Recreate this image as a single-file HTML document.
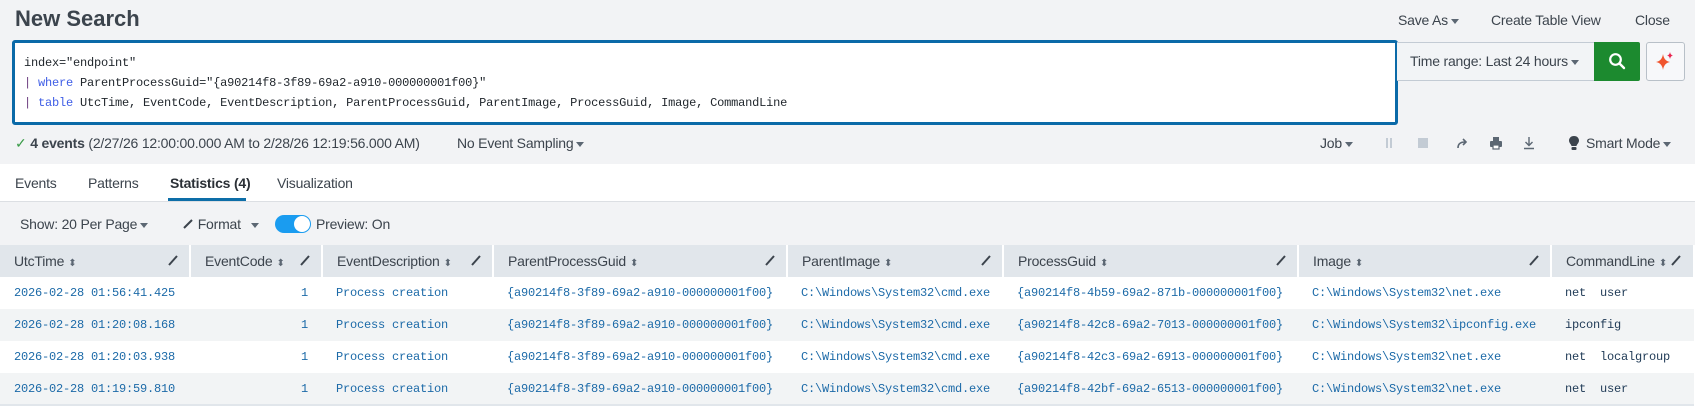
<!DOCTYPE html>
<html><head><meta charset="utf-8"><style>
*{box-sizing:border-box;margin:0;padding:0}
body{width:1695px;height:410px;overflow:hidden;background:#fff;font-family:"Liberation Sans",sans-serif;color:#3c444d;position:relative}
.abs{position:absolute;white-space:nowrap}
.top{position:absolute;left:0;top:0;width:1695px;height:164px;background:#f2f3f5}
.mono{font-family:"Liberation Mono",monospace;font-size:12px;letter-spacing:-0.2px}
.t14{font-size:14px;letter-spacing:-0.2px}
.caret{display:inline-block;width:0;height:0;border-left:4px solid transparent;border-right:4px solid transparent;border-top:5px solid #5c6773;vertical-align:middle;margin-left:3px}
.tb{position:absolute;left:0;top:202px;width:1695px;height:43px;background:#f2f3f5}
table{position:absolute;left:0;top:245px;border-collapse:collapse;width:1695px}
th{height:32px;background:#e1e6eb;text-align:left;font-weight:normal;font-size:14px;letter-spacing:-0.2px;color:#3c444d;padding-left:14px;border-right:2px solid #fff;position:relative;white-space:nowrap}
td{height:32px;padding-left:14px;color:#1c6aa8;white-space:nowrap}
tr.s td{background:#f2f4f5}
tbody tr:last-child td{border-bottom:2px solid #e1e6eb}
.sort{color:#5c6773;font-size:10px;margin-left:4px}
.pen{position:absolute;right:10px;top:9px;width:12px;height:12px}
</style></head><body>
<div class="top"></div>
<div class="abs" style="left:15px;top:6px;font-size:22px;font-weight:bold;color:#3c444d">New Search</div>
<div class="abs t14" style="left:1398px;top:12px">Save As<span class="caret"></span></div>
<div class="abs t14" style="left:1491px;top:12px">Create Table View</div>
<div class="abs t14" style="left:1635px;top:12px">Close</div>

<div class="abs" style="left:12px;top:40px;width:1386px;height:85px;background:#fff;border:3px solid #0b6aa8;border-radius:3px"></div>
<div class="abs mono" style="left:24px;top:53px;line-height:20px;color:#1f252b">index="endpoint"<br><span style="color:#6b3a7e">|</span> <span style="color:#3f5ee6">where</span> ParentProcessGuid="{a90214f8-3f89-69a2-a910-000000001f00}"<br><span style="color:#6b3a7e">|</span> <span style="color:#3f5ee6">table</span> UtcTime, EventCode, EventDescription, ParentProcessGuid, ParentImage, ProcessGuid, Image, CommandLine</div>

<div class="abs" style="left:1397px;top:42px;width:197px;height:39px;background:#f2f4f6;border-top:1px solid #c3cbd4;border-bottom:1px solid #c3cbd4"></div>
<div class="abs t14" style="left:1410px;top:53px">Time range: Last 24 hours<span class="caret"></span></div>
<div class="abs" style="left:1594px;top:42px;width:46px;height:39px;background:#1c8a2f;border-radius:0 2px 2px 0"></div>
<svg class="abs" style="left:1608px;top:52px" width="18" height="18" viewBox="0 0 18 18"><circle cx="7.5" cy="7.5" r="5.3" fill="none" stroke="#fff" stroke-width="2.2"/><path d="M11.5 11.5L16 16" stroke="#fff" stroke-width="2.4" stroke-linecap="round"/></svg>
<div class="abs" style="left:1646px;top:42px;width:39px;height:39px;background:#f7f8fa;border:1px solid #b8c0c8;border-radius:3px"></div>
<svg class="abs" style="left:1654px;top:50px" width="22" height="22" viewBox="0 0 22 22"><path d="M9 4 Q10 11 16 12 Q10 13 9 20 Q8 13 2 12 Q8 11 9 4Z" fill="#f0542d"/><path d="M16 2 Q16.5 5 19 5.5 Q16.5 6 16 9 Q15.5 6 13 5.5 Q15.5 5 16 2Z" fill="#e8254f"/></svg>

<div class="abs t14" style="left:15px;top:135px"><span style="color:#3a9b48">✓</span> <b>4 events</b> (2/27/26 12:00:00.000 AM to 2/28/26 12:19:56.000 AM)</div>
<div class="abs t14" style="left:457px;top:135px">No Event Sampling<span class="caret"></span></div>
<div class="abs t14" style="left:1320px;top:135px">Job<span class="caret"></span></div>
<div class="abs" style="left:1386px;top:138px;width:2px;height:10px;background:#c3cbd4"></div>
<div class="abs" style="left:1390px;top:138px;width:2px;height:10px;background:#c3cbd4"></div>
<div class="abs" style="left:1418px;top:138px;width:10px;height:10px;background:#c3cbd4"></div>
<svg class="abs" style="left:1455px;top:136px" width="14" height="14" viewBox="0 0 14 14"><path d="M3 12 Q3 6 10 6" fill="none" stroke="#5c6773" stroke-width="1.6"/><path d="M8 3 L11 6 L8 9" fill="none" stroke="#5c6773" stroke-width="1.6"/></svg>
<svg class="abs" style="left:1489px;top:136px" width="14" height="14" viewBox="0 0 14 14"><rect x="4" y="1" width="6" height="4" fill="#5c6773"/><rect x="1" y="5" width="12" height="6" rx="1" fill="#5c6773"/><rect x="4" y="9" width="6" height="4" fill="#fff" stroke="#5c6773" stroke-width="1.2"/></svg>
<svg class="abs" style="left:1522px;top:136px" width="14" height="14" viewBox="0 0 14 14"><path d="M7 1V9M3.5 6L7 9.5L10.5 6M2 12.5H12" fill="none" stroke="#5c6773" stroke-width="1.4"/></svg>
<svg class="abs" style="left:1568px;top:135px" width="12" height="16" viewBox="0 0 12 16"><path d="M6 1C2.5 1 1 3.5 1 5.5C1 8 3 9 3.5 11H8.5C9 9 11 8 11 5.5C11 3.5 9.5 1 6 1Z" fill="#3c444d"/><rect x="3.5" y="12" width="5" height="3" rx="1" fill="#3c444d"/></svg>
<div class="abs t14" style="left:1586px;top:135px">Smart Mode<span class="caret"></span></div>

<div class="abs" style="left:0;top:201px;width:1695px;height:1px;background:#dcdfe3"></div>
<div class="abs t14" style="left:15px;top:175px">Events</div>
<div class="abs t14" style="left:88px;top:175px">Patterns</div>
<div class="abs t14" style="left:170px;top:175px;font-weight:bold;color:#2b3036">Statistics (4)</div>
<div class="abs t14" style="left:277px;top:175px">Visualization</div>
<div class="abs" style="left:168px;top:198px;width:78px;height:3px;background:#0d6ea8"></div>

<div class="tb"></div>
<div class="abs t14" style="left:20px;top:216px">Show: 20 Per Page<span class="caret"></span></div>
<div class="abs t14" style="left:183px;top:216px"><svg width="11" height="11" viewBox="0 0 11 11"><path d="M1 10L9 2" stroke="#3c444d" stroke-width="2"/></svg> Format <span class="caret" style="margin-left:6px"></span></div>
<div class="abs" style="left:275px;top:215px;width:36px;height:18px;border-radius:9px;background:#1a9cf0"></div>
<div class="abs" style="left:294px;top:216px;width:16px;height:16px;border-radius:8px;background:#fff"></div>
<div class="abs t14" style="left:316px;top:216px">Preview: On</div>

<table>
<colgroup><col style="width:190px"><col style="width:132px"><col style="width:171px"><col style="width:294px"><col style="width:216px"><col style="width:295px"><col style="width:253px"><col></colgroup>
<thead><tr>
<th>UtcTime<span class="sort">⬍</span><svg class="pen" viewBox="0 0 12 12"><path d="M2 11L10 2" stroke="#3c444d" stroke-width="2"/></svg></th>
<th>EventCode<span class="sort">⬍</span><svg class="pen" viewBox="0 0 12 12"><path d="M2 11L10 2" stroke="#3c444d" stroke-width="2"/></svg></th>
<th>EventDescription<span class="sort">⬍</span><svg class="pen" viewBox="0 0 12 12"><path d="M2 11L10 2" stroke="#3c444d" stroke-width="2"/></svg></th>
<th>ParentProcessGuid<span class="sort">⬍</span><svg class="pen" viewBox="0 0 12 12"><path d="M2 11L10 2" stroke="#3c444d" stroke-width="2"/></svg></th>
<th>ParentImage<span class="sort">⬍</span><svg class="pen" viewBox="0 0 12 12"><path d="M2 11L10 2" stroke="#3c444d" stroke-width="2"/></svg></th>
<th>ProcessGuid<span class="sort">⬍</span><svg class="pen" viewBox="0 0 12 12"><path d="M2 11L10 2" stroke="#3c444d" stroke-width="2"/></svg></th>
<th>Image<span class="sort">⬍</span><svg class="pen" viewBox="0 0 12 12"><path d="M2 11L10 2" stroke="#3c444d" stroke-width="2"/></svg></th>
<th>CommandLine<span class="sort">⬍</span><svg class="pen" style="right:auto;left:118px" viewBox="0 0 12 12"><path d="M2 11L10 2" stroke="#3c444d" stroke-width="2"/></svg></th>
</tr></thead>
<tbody class="mono">
<tr><td>2026-02-28 01:56:41.425</td><td style="text-align:right;padding-right:14px">1</td><td>Process creation</td><td>{a90214f8-3f89-69a2-a910-000000001f00}</td><td>C:\Windows\System32\cmd.exe</td><td>{a90214f8-4b59-69a2-871b-000000001f00}</td><td>C:\Windows\System32\net.exe</td><td style="color:#1f3a56">net&nbsp;&nbsp;user</td></tr>
<tr class="s"><td>2026-02-28 01:20:08.168</td><td style="text-align:right;padding-right:14px">1</td><td>Process creation</td><td>{a90214f8-3f89-69a2-a910-000000001f00}</td><td>C:\Windows\System32\cmd.exe</td><td>{a90214f8-42c8-69a2-7013-000000001f00}</td><td>C:\Windows\System32\ipconfig.exe</td><td style="color:#1f3a56">ipconfig</td></tr>
<tr><td>2026-02-28 01:20:03.938</td><td style="text-align:right;padding-right:14px">1</td><td>Process creation</td><td>{a90214f8-3f89-69a2-a910-000000001f00}</td><td>C:\Windows\System32\cmd.exe</td><td>{a90214f8-42c3-69a2-6913-000000001f00}</td><td>C:\Windows\System32\net.exe</td><td style="color:#1f3a56">net&nbsp;&nbsp;localgroup</td></tr>
<tr class="s"><td>2026-02-28 01:19:59.810</td><td style="text-align:right;padding-right:14px">1</td><td>Process creation</td><td>{a90214f8-3f89-69a2-a910-000000001f00}</td><td>C:\Windows\System32\cmd.exe</td><td>{a90214f8-42bf-69a2-6513-000000001f00}</td><td>C:\Windows\System32\net.exe</td><td style="color:#1f3a56">net&nbsp;&nbsp;user</td></tr>
</tbody></table>
</body></html>
